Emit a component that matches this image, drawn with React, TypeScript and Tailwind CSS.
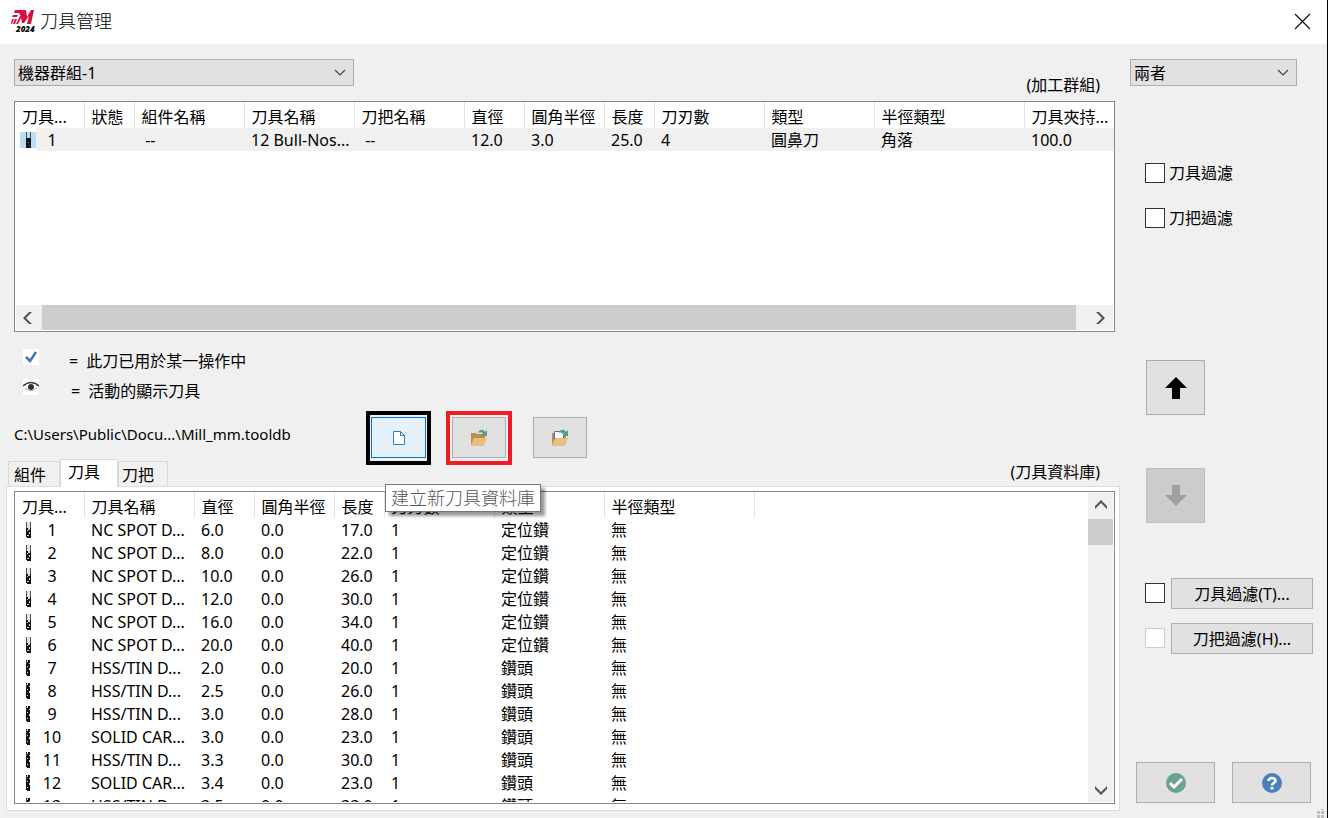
import { ReactNode } from "react";

type Column = { label: string; width: string };

const groupColumns: Column[] = [
  { label: "刀具...", width: "w-[69px]" },
  { label: "狀態", width: "w-[50px]" },
  { label: "組件名稱", width: "w-[110px]" },
  { label: "刀具名稱", width: "w-[110px]" },
  { label: "刀把名稱", width: "w-[110px]" },
  { label: "直徑", width: "w-[60px]" },
  { label: "圓角半徑", width: "w-[80px]" },
  { label: "長度", width: "w-[50px]" },
  { label: "刀刃數", width: "w-[110px]" },
  { label: "類型", width: "w-[110px]" },
  { label: "半徑類型", width: "w-[150px]" },
  { label: "刀具夾持...", width: "" },
];

const libraryColumns: Column[] = [
  { label: "刀具...", width: "w-[69px]" },
  { label: "刀具名稱", width: "w-[110px]" },
  { label: "直徑", width: "w-[60px]" },
  { label: "圓角半徑", width: "w-[80px]" },
  { label: "長度", width: "w-[50px]" },
  { label: "刀刃數", width: "w-[110px]" },
  { label: "類型", width: "w-[110px]" },
  { label: "半徑類型", width: "w-[150px]" },
  { label: "", width: "" },
];

const libraryTools = [
  { name: "NC SPOT D...", diameter: "6.0", length: "17.0", type: "定位鑽" },
  { name: "NC SPOT D...", diameter: "8.0", length: "22.0", type: "定位鑽" },
  { name: "NC SPOT D...", diameter: "10.0", length: "26.0", type: "定位鑽" },
  { name: "NC SPOT D...", diameter: "12.0", length: "30.0", type: "定位鑽" },
  { name: "NC SPOT D...", diameter: "16.0", length: "34.0", type: "定位鑽" },
  { name: "NC SPOT D...", diameter: "20.0", length: "40.0", type: "定位鑽" },
  { name: "HSS/TIN D...", diameter: "2.0", length: "20.0", type: "鑽頭" },
  { name: "HSS/TIN D...", diameter: "2.5", length: "26.0", type: "鑽頭" },
  { name: "HSS/TIN D...", diameter: "3.0", length: "28.0", type: "鑽頭" },
  { name: "SOLID CAR...", diameter: "3.0", length: "23.0", type: "鑽頭" },
  { name: "HSS/TIN D...", diameter: "3.3", length: "30.0", type: "鑽頭" },
  { name: "SOLID CAR...", diameter: "3.4", length: "23.0", type: "鑽頭" },
  { name: "HSS/TIN D...", diameter: "3.5", length: "33.0", type: "鑽頭" },
];

function Logo() {
  return (
    <svg width="24" height="24" viewBox="0 0 24 24" aria-hidden="true">
      <g fill="#d3123c">
        <path d="M4 1h8l-1 4-2 1-1-2H3zM2 6h5l-1 2H1zM1 10h2l-2 5H0zM4 10h2l-2 5H2z" />
        <path d="M12 1h3l1 7 4-7h3l-3 14h-4l2-8-5 7h-2l-1-5-3 6H5l4-8z" />
      </g>
      <text
        x="5"
        y="23"
        fontSize="8"
        fontWeight="800"
        fontStyle="italic"
        fontFamily="Open Sans, sans-serif"
      >
        2024
      </text>
    </svg>
  );
}

function ToolIcon({ kind }: { kind: "bull" | "spot" | "drill" }) {
  if (kind === "drill") {
    return (
      <svg width="16" height="16" shapeRendering="crispEdges" aria-hidden="true">
        <path d="M6 0h4v15l-1 1H7l-1-1z" fill="#111" />
        <path d="M7 0h1v2H7zM9 3h1v1H9zM7 6h1v1H7zM9 8h1v2H9zM7 12h1v1H7z" fill="#ddd" />
        <path d="M6 1h1v3H6z" fill="#8b2020" />
      </svg>
    );
  }
  if (kind === "bull") {
    return (
      <svg
        className="bg-[#bcdcf4]"
        width="16"
        height="16"
        shapeRendering="crispEdges"
        aria-hidden="true"
      >
        <path d="M6 0h1v6H6zM10 0h1v6h-1z" fill="#46525c" />
        <path d="M6 6h5v10H6z" fill="#06121f" />
        <path d="M8 10h1v1H8zM9 13h1v1H9z" fill="#5f7f98" />
      </svg>
    );
  }
  return (
    <svg width="16" height="16" shapeRendering="crispEdges" aria-hidden="true">
      <path d="M7 0h3v6H7z" fill="#dfe4e2" />
      <path d="M6 0h1v6H6zM10 0h1v6h-1z" fill="#555" />
      <path d="M6 6h5v9l-1 1H7l-1-1z" fill="#111" />
      <path d="M8 6h2v2H8zM7 8h1v1H7zM9 10h1v2H9zM7 13h2v1H7z" fill="#d5dfe2" />
    </svg>
  );
}

function FolderIcon({ withFile }: { withFile?: boolean }) {
  return (
    <svg width="18" height="18" viewBox="0 0 18 18" aria-hidden="true">
      <path d="M1 4h5l1 1h8v4H4l-3 8z" fill="#b98d4b" />
      {withFile && (
        <path d="M3.500 2.500h6l3 3v8h-9z" fill="#fff" stroke="#3f79b5" />
      )}
      <path d="M4 9h13l-3 8H1z" fill="#e9bf80" />
      <path d="M8 4c1-4 6-4 7-1l2-2v6h-6l2-2c-1-2-3-2-5-1z" fill="#5d9985" />
    </svg>
  );
}

function Chevron({ className }: { className: string }) {
  return (
    <svg className={className} width="12" height="12" viewBox="0 0 12 12" aria-hidden="true">
      <path d="M0 3v3l6 6 6-6V3L6 9z" fill="#555" />
    </svg>
  );
}

function ComboBox({ label, option, className }: { label: string; option: string; className: string }) {
  return (
    <div className={`grid items-center ${className}`}>
      <select
        aria-label={label}
        className="col-start-1 row-start-1 h-[27px] w-full appearance-none border border-[#adadad] bg-[#e1e1e1] pl-[3px]"
      >
        <option>{option}</option>
      </select>
      <svg
        className="pointer-events-none col-start-1 row-start-1 mr-2 justify-self-end"
        width="12"
        height="8"
        viewBox="0 0 12 8"
        aria-hidden="true"
      >
        <path d="M1 1l5 5 5-5" fill="none" stroke="#444" strokeWidth="1.2" />
      </svg>
    </div>
  );
}

function HeaderRow({ columns }: { columns: Column[] }) {
  return (
    <thead>
      <tr className="h-[26px]">
        {columns.map(({ label, width }, i) => (
          <th
            key={i}
            className={`overflow-hidden border-[#e3e3e3] pt-1 pl-[7px] text-left font-normal not-last:border-r ${width}`}
          >
            {label}
          </th>
        ))}
      </tr>
    </thead>
  );
}

function Row({ cells, icon, selected }: { cells: string[]; icon: ReactNode; selected?: boolean }) {
  const [number, ...rest] = cells;
  return (
    <tr className={`h-[23px] ${selected ? "bg-[#f0f0f0]" : ""}`}>
      <td className="p-0">
        <div className="flex h-[23px] items-center">
          <span className="flex h-full w-[21px] items-center bg-white pl-[5px]">{icon}</span>
          <span className="w-8 text-center">{number}</span>
        </div>
      </td>
      {rest.map((cell, i) => (
        <td key={i} className="overflow-hidden pl-[7px]">
          {cell}
        </td>
      ))}
    </tr>
  );
}

const button = "flex items-center justify-center border border-[#adadad] bg-[#e1e1e1]";
const checkbox = "size-5 shrink-0 appearance-none border bg-white";

export default function App() {
  return (
    <div className="flex h-screen flex-col overflow-hidden border-r border-black bg-[#f0f0f0] font-['Noto_Sans','Noto_Sans_CJK_TC',sans-serif] text-[16px] leading-[22px] whitespace-nowrap text-black">
      <header className="flex h-11 shrink-0 items-center bg-white pb-0.5 pl-[11px]">
        <Logo />
        <h1 className="ml-[5px] text-[18px] font-light">刀具管理</h1>
        <button className="mr-4 ml-auto" aria-label="Close">
          <svg width="17" height="17" viewBox="0 0 17 17" aria-hidden="true">
            <path d="M1 1l15 15M16 1L1 16" stroke="#111" strokeWidth="1.2" />
          </svg>
        </button>
      </header>

      <div className="flex min-h-0 flex-1">
        <main className="flex min-w-0 flex-1 flex-col pl-1.5">
          <div className="flex h-[57px] shrink-0 items-start justify-between pt-[15px] pr-5 pl-2">
            <ComboBox label="Machine group" option="機器群組-1" className="w-[340px]" />
            <span className="pt-[15px]">(加工群組)</span>
          </div>

          <section className="mr-[5px] ml-2 flex h-[231px] shrink-0 flex-col border border-[#828790] bg-white">
            <div className="flex-1 overflow-hidden">
              <table className="w-full table-fixed border-collapse">
                <HeaderRow columns={groupColumns} />
                <tbody>
                  <Row
                    selected
                    icon={<ToolIcon kind="bull" />}
                    cells={["1", "", "\u00a0--", "12 Bull-Nos...", "\u00a0--", "12.0", "3.0", "25.0", "4", "圓鼻刀", "角落", "100.0"]}
                  />
                </tbody>
              </table>
            </div>
            <div className="mx-px mb-px flex h-[25px] items-center bg-[#f0f0f0]">
              <span className="flex w-[26px] justify-center">
                <Chevron className="rotate-90" />
              </span>
              <span className="h-full flex-1 bg-[#cdcdcd]" />
              <span className="flex w-[37px] justify-center pl-2">
                <Chevron className="-rotate-90" />
              </span>
            </div>
          </section>

          <ul className="pt-[14px] pl-[17px]">
            <li className="flex h-[30px] items-center">
              <svg className="mb-2 bg-white" width="16" height="16" aria-hidden="true">
                <path d="M3 8l4 4 6-9" fill="none" stroke="#3f79b5" strokeWidth="2.5" />
              </svg>
              <span className="mr-2 ml-[30px]">=</span>
              此刀已用於某一操作中
            </li>
            <li className="flex h-[30px] items-center">
              <svg className="mb-2 bg-white" width="16" height="16" aria-hidden="true">
                <path d="M0 7q8-7 16 0" fill="none" stroke="#333" strokeWidth="1.5" />
                <circle cx="8" cy="8" r="3" fill="#333" />
                <path d="M2 9q6 5 12 0" fill="none" stroke="#aaa" />
              </svg>
              <span className="mr-2 ml-8">=</span>
              活動的顯示刀具
            </li>
          </ul>

          <div className="mt-[5px] flex h-[54px] shrink-0 items-start pl-2">
            <span className="w-[352px] pt-3 text-[15px]">C:\Users\Public\Docu...\Mill_mm.tooldb</span>
            <div className="relative border-4 border-black px-px pt-0.5 pb-[3px]">
              <button
                className="flex h-[41px] w-[55px] items-center justify-center border border-[#0078d7] bg-[#e5f1fb]"
                aria-label="建立新刀具資料庫"
              >
                <svg width="16" height="16" viewBox="0 0 16 16" aria-hidden="true">
                  <path
                    d="M2.500 1.500h7l4 4v9h-11zM9.500 1.500v4h4"
                    fill="#fff"
                    stroke="#3f79b5"
                  />
                </svg>
              </button>
              <div
                role="tooltip"
                className="absolute top-[69px] left-[15px] z-20 border border-[#767676] bg-white px-[5px] text-[18px] leading-[26px] font-light text-[#575757] shadow-[4px_4px_3px_rgba(0,0,0,0.4)]"
              >
                建立新刀具資料庫
              </div>
            </div>
            <div className="ml-[15px] border-4 border-[#ed1c24] px-0.5 pt-0.5 pb-[3px]">
              <button className={`h-[41px] w-[54px] ${button}`} aria-label="Open library">
                <FolderIcon />
              </button>
            </div>
            <button className={`mt-1.5 ml-[21px] h-[41px] w-[54px] ${button}`} aria-label="Import library">
              <FolderIcon withFile />
            </button>
          </div>

          <div className="-mt-[5px] flex h-[26px] shrink-0 items-end pr-5 pl-0.5" role="tablist">
            <button role="tab" aria-selected="false" className="h-[25px] w-[52px] border border-b-0 border-[#d9d9d9] pt-0.5 pr-2">
              組件
            </button>
            <button role="tab" aria-selected="true" className="z-10 -mb-px h-7 w-[58px] border border-b-0 border-[#d9d9d9] bg-white pr-2.5 pb-1">
              刀具
            </button>
            <button role="tab" aria-selected="false" className="h-[25px] w-[50px] border border-b-0 border-[#d9d9d9] pt-0.5 pr-2.5">
              刀把
            </button>
            <span className="mb-[3px] ml-auto">(刀具資料庫)</span>
          </div>

          <section className="mb-[7px] flex min-h-0 flex-1 border border-[#dcdcdc] bg-white pt-1 pr-1 pb-1.5 pl-[7px]">
            <div className="flex min-w-0 flex-1 border border-[#828790]">
              <div className="mb-px min-w-0 flex-1 overflow-hidden">
                <table className="w-full table-fixed border-collapse">
                  <HeaderRow columns={libraryColumns} />
                  <tbody>
                    {libraryTools.map(({ name, diameter, length, type }, i) => (
                      <Row
                        key={i}
                        icon={<ToolIcon kind={type === "定位鑽" ? "spot" : "drill"} />}
                        cells={[String(i + 1), name, diameter, "0.0", length, "1", type, "無", ""]}
                      />
                    ))}
                  </tbody>
                </table>
              </div>
              <div className="m-px flex w-[25px] flex-col items-center bg-[#f0f0f0]">
                <span className="flex h-[26px] items-center">
                  <Chevron className="rotate-180" />
                </span>
                <span className="h-[26px] w-full bg-[#cdcdcd]" />
                <span className="mt-auto flex h-[26px] items-center">
                  <Chevron className="" />
                </span>
              </div>
            </div>
          </section>
        </main>

        <aside className="relative flex w-[207px] shrink-0 flex-col pr-[14px] pl-[25px]">
          <ComboBox label="Filter scope" option="兩者" className="mt-[15px] -ml-[15px] w-[167px]" />
          <label className="mt-[77px] flex h-5 items-center gap-1">
            <input type="checkbox" className={`${checkbox} border-[#333]`} />
            刀具過濾
          </label>
          <label className="mt-[25px] flex h-5 items-center gap-1">
            <input type="checkbox" className={`${checkbox} border-[#333]`} />
            刀把過濾
          </label>

          <button className={`mt-[132px] ml-px h-[55px] w-[59px] ${button}`} aria-label="Move up">
            <svg width="22" height="22" aria-hidden="true">
              <path d="M11 0l11 11h-7v11H7V11H0z" />
            </svg>
          </button>
          <button
            disabled
            className="mt-[53px] ml-px flex h-[55px] w-[59px] items-center justify-center border border-[#bfbfbf] bg-[#cccccc]"
            aria-label="Move down"
          >
            <svg width="22" height="22" fill="#a0a0a0" aria-hidden="true">
              <path d="M7 0h8v10h7L11 21 0 10h7z" />
            </svg>
          </button>

          <div className="mt-[55px] flex items-start gap-1.5">
            <input type="checkbox" aria-label="刀具過濾" className={`mt-[5px] ${checkbox} border-[#333]`} />
            <button className={`h-[31px] flex-1 ${button}`}>刀具過濾(T)...</button>
          </div>
          <div className="mt-[14px] flex items-start gap-1.5">
            <input type="checkbox" disabled aria-label="刀把過濾" className={`mt-[5px] ${checkbox} border-[#ccc]`} />
            <button className={`h-[31px] flex-1 ${button}`}>刀把過濾(H)...</button>
          </div>

          <div className="mt-auto mb-[15px] -ml-[9px] flex gap-[17px]">
            <button className={`h-[41px] w-[79px] ${button}`} aria-label="OK">
              <svg width="20" height="20" aria-hidden="true">
                <circle cx="10" cy="10" r="10" fill="#68a490" />
                <path d="M4 10l4 4 8-8" fill="none" stroke="#fff" strokeWidth="3" />
              </svg>
            </button>
            <button className={`h-[41px] w-[79px] ${button}`} aria-label="Help">
              <svg width="20" height="20" aria-hidden="true">
                <circle cx="10" cy="10" r="10" fill="#4a80ba" />
                <path d="M6.500 8c0-4 7-4 7 0 0 2-3.500 2-3.500 4.500" fill="none" stroke="#fff" strokeWidth="2.600" />
                <path d="M8.500 14h3v2.500h-3z" fill="#fff" />
              </svg>
            </button>
          </div>
          <svg className="absolute right-0.5 bottom-0" width="8" height="9" fill="#bfbfbf" aria-hidden="true">
            <path d="M4 0h3v1H4zM0 2h3v3H0zM4 2h3v3H4zM0 6h3v3H0zM4 6h3v3H4z" />
          </svg>
        </aside>
      </div>
    </div>
  );
}
